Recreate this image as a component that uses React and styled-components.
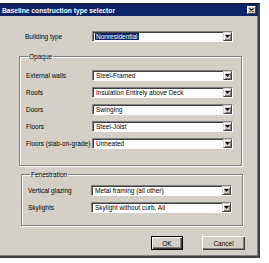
import React from 'react';
import styled, { createGlobalStyle } from 'styled-components';

const GlobalStyle = createGlobalStyle`
  html, body {
    margin: 0;
    padding: 0;
    background: #ffffff;
  }
  body {
    font-family: "Liberation Sans", Arial, sans-serif;
  }
`;

const Dialog = styled.div`
  margin-top: 3px;
  width: 258px;
  height: 252px;
  background: #d4d0c8;
  border-top: 1px solid #1a1a1a;
  border-right: 2px solid #404040;
  border-bottom: 2px solid #404040;
  box-shadow: inset -1px -1px 0 #808080;
  display: flex;
  flex-direction: column;
`;

const TitleBar = styled.div`
  height: 12px;
  background: #0a2467;
  display: flex;
  align-items: center;
  justify-content: space-between;
  padding: 0 2px 0 2px;
`;

const Title = styled.span`
  color: #ffffff;
  font-weight: bold;
  font-size: 6.7px;
`;

const CloseButton = styled.div`
  width: 9px;
  height: 8px;
  box-sizing: border-box;
  background: #d4d0c8;
  border-top: 1px solid #ffffff;
  border-left: 1px solid #ffffff;
  border-right: 1px solid #404040;
  border-bottom: 1px solid #404040;
  display: flex;
  align-items: center;
  justify-content: center;
`;

const Content = styled.div`
  padding: 15px 16px 0 19px;
  display: flex;
  flex-direction: column;
`;

const Row = styled.div`
  display: grid;
  grid-template-columns: ${p => p.$labelWidth}px 141px;
  align-items: center;
  height: 11px;
`;

const Label = styled.span`
  font-size: 6.5px;
  color: #000;
  white-space: nowrap;
  padding-left: ${p => p.$indent || 0}px;
`;

const Combo = styled.div`
  height: 11px;
  box-sizing: border-box;
  background: #ffffff;
  border-top: 1px solid #808080;
  border-left: 1px solid #808080;
  border-right: 1px solid #ffffff;
  border-bottom: 1px solid #ffffff;
  box-shadow: inset 1px 1px 0 #404040;
  display: flex;
  align-items: center;
  justify-content: space-between;
  padding: 0 0 0 2px;
`;

const Value = styled.span`
  font-size: 6.5px;
  line-height: 7px;
  color: ${p => (p.$selected ? '#ffffff' : '#000000')};
  background: ${p => (p.$selected ? '#0a2467' : 'transparent')};
  padding: 0 1px;
  white-space: nowrap;
`;

const ArrowButton = styled.div`
  width: 9px;
  height: 9px;
  box-sizing: border-box;
  background: #d4d0c8;
  border-top: 1px solid #d4d0c8;
  border-left: 1px solid #d4d0c8;
  border-right: 1px solid #404040;
  border-bottom: 1px solid #404040;
  box-shadow: inset 1px 1px 0 #ffffff, inset -1px -1px 0 #808080;
  display: flex;
  align-items: center;
  justify-content: center;
`;

const Group = styled.fieldset`
  margin: ${p => p.$top}px ${p => p.$right}px 0 ${p => p.$left}px;
  padding: ${p => p.$padTop}px 8px ${p => p.$padBottom}px ${p => p.$padLeft}px;
  min-width: 0;
  border: 1px solid #808080;
  box-shadow: inset 1px 1px 0 #ffffff, 1px 1px 0 #ffffff;
  display: flex;
  flex-direction: column;
  gap: 6px;
`;

const Legend = styled.legend`
  font-size: 6.5px;
  padding: 0 1px;
  margin-left: 2px;
  color: #000;
`;

const ButtonBar = styled.div`
  display: flex;
  justify-content: flex-end;
  gap: 19px;
  margin: 10px -3px 0 0;
`;

const Button = styled.div`
  width: ${p => p.$width}px;
  height: 14px;
  box-sizing: border-box;
  background: #d4d0c8;
  font-size: 6.5px;
  color: #000;
  display: flex;
  align-items: center;
  justify-content: center;
  border: ${p => (p.$default ? '1px solid #000' : 'none')};
  box-shadow: inset 1px 1px 0 #ffffff, inset -1px -1px 0 #404040, inset -2px -2px 0 #808080;
`;

const Arrow = () => (
  <svg width="5" height="3" viewBox="0 0 5 3">
    <polygon points="0,0 5,0 2.5,3" fill="#000" />
  </svg>
);

const CloseIcon = () => (
  <svg width="5" height="4" viewBox="0 0 5 4">
    <path d="M0.5 0.5 L4.5 3.5 M4.5 0.5 L0.5 3.5" stroke="#000" strokeWidth="1.1" />
  </svg>
);

const Select = ({ value, selected }) => (
  <Combo>
    <Value $selected={selected}>{value}</Value>
    <ArrowButton>
      <Arrow />
    </ArrowButton>
  </Combo>
);

const opaque = [
  ['External walls', 'Steel-Framed'],
  ['Roofs', 'Insulation Entirely above Deck'],
  ['Doors', 'Swinging'],
  ['Floors', 'Steel-Joist'],
  ['Floors (slab-on-grade)', 'Unheated'],
];

const fenestration = [
  ['Vertical glazing', 'Metal framing (all other)'],
  ['Skylights', 'Skylight without curb, All'],
];

export default function App() {
  return (
    <>
      <GlobalStyle />
      <Dialog>
        <TitleBar>
          <Title>Baseline construction type selector</Title>
          <CloseButton>
            <CloseIcon />
          </CloseButton>
        </TitleBar>
        <Content>
          <Row $labelWidth={73}>
            <Label $indent={6}>Building type</Label>
            <Select value="Nonresidential" selected />
          </Row>
          <Group $top={11} $right={0} $left={0} $padTop={10} $padBottom={16} $padLeft={6}>
            <Legend>Opaque</Legend>
            {opaque.map(([label, value]) => (
              <Row key={label} $labelWidth={66}>
                <Label>{label}</Label>
                <Select value={value} />
              </Row>
            ))}
          </Group>
          <Group $top={5} $right={-1} $left={2} $padTop={7} $padBottom={12} $padLeft={6}>
            <Legend>Fenestration</Legend>
            {fenestration.map(([label, value]) => (
              <Row key={label} $labelWidth={63}>
                <Label>{label}</Label>
                <Select value={value} />
              </Row>
            ))}
          </Group>
          <ButtonBar>
            <Button $width={32} $default>OK</Button>
            <Button $width={43}>Cancel</Button>
          </ButtonBar>
        </Content>
      </Dialog>
    </>
  );
}
